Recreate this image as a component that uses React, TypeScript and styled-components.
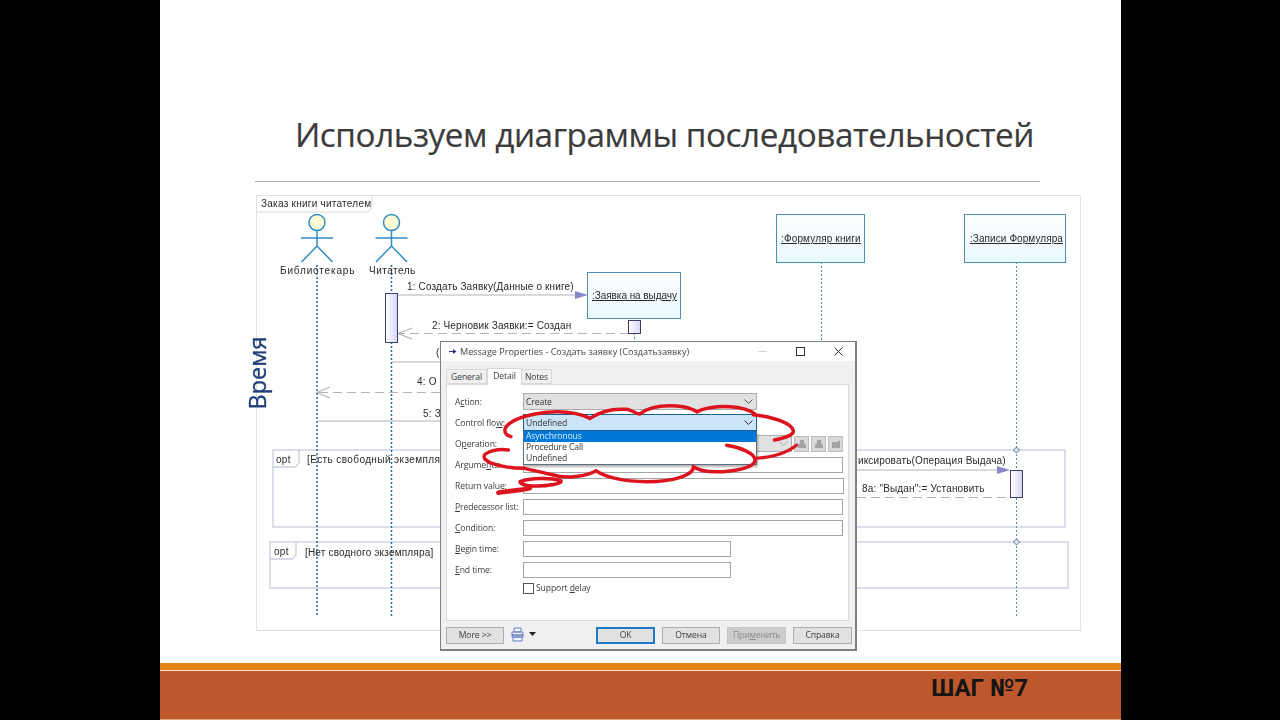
import React from "react";
import styled, { createGlobalStyle } from "styled-components";

const Global = createGlobalStyle`
  html, body { margin: 0; padding: 0; background: #000; width: 1280px; height: 720px; overflow: hidden; }
  #root { width: 1280px; height: 720px; }
`;

const Page = styled.div`
  width: 1280px;
  height: 720px;
  display: flex;
  justify-content: center;
  background: #000;
  padding-left: 1px;
  box-sizing: border-box;
`;
const Slide = styled.div`
  width: 961px;
  height: 720px;
  background: #fff;
  display: flex;
  flex-direction: column;
`;
const TitleBlock = styled.div`
  height: 195px;
  display: flex;
  flex-direction: column;
`;
const Title = styled.h1`
  margin: 0;
  padding: 111px 0 0 135px;
  height: 157px;
  box-sizing: border-box;
  font: 400 33.3px/46px "Open Sans", sans-serif;
  color: #3c3c3c;
  letter-spacing: -0.45px;
  white-space: nowrap;
  -webkit-text-stroke: 0.2px #3c3c3c;
`;
const Rule = styled.div`
  margin-left: 95px;
  margin-top: 24px;
  width: 785px;
  height: 1px;
  background: #a9a9a9;
`;
const Panel = styled.div`
  position: relative;
  margin-left: 96px;
  width: 825px;
  height: 436px;
  box-shadow: inset 0 0 0 1px #e2e2e2;
  font-family: "Liberation Sans", Arial, sans-serif;
  filter: blur(0.3px);
`;
const DiagramArt = styled.svg`
  position: absolute;
  left: 0;
  top: 0;
  width: 825px;
  height: 436px;
`;
const Label = styled.span<{ $x: number; $y: number; $u?: boolean; $ls?: number }>`
  position: absolute;
  left: ${(p) => p.$x - 256}px;
  top: ${(p) => p.$y - 195 - 6}px;
  font-size: 10px;
  line-height: 14px;
  color: #2a2a2a;
  white-space: nowrap;
  letter-spacing: ${(p) => p.$ls ?? 0.2}px;
  text-decoration: ${(p) => (p.$u ? "underline" : "none")};
`;
const TimeLabel = styled.span`
  position: absolute;
  left: -39px;
  top: 164px;
  width: 80px;
  text-align: center;
  transform: rotate(-90deg);
  font: 400 23.5px/28px "Open Sans", sans-serif;
  color: #1f3d7a;
  -webkit-text-stroke: 0.3px #1f3d7a;
`;

const Dialog = styled.div`
  position: absolute;
  left: 184px;
  top: 146px;
  width: 417px;
  height: 310px;
  box-sizing: border-box;
  border: 1px solid #7f7f7f;
  border-right-width: 2px;
  border-bottom-width: 2px;
  background: #f0f0f0;
  font: 400 8.6px/12px "Open Sans", sans-serif;
  letter-spacing: -0.1px;
  color: #3c3c3c;
  display: flex;
  flex-direction: column;
`;
const TitleBar = styled.div`
  height: 19px;
  flex: none;
  background: #fff;
  display: flex;
  align-items: center;
  padding: 0 12px 0 8px;
  gap: 3px;
  font-size: 9.1px;
  letter-spacing: -0.02px;
  color: #444;
`;
const TitleText = styled.span`
  flex: 1;
  white-space: nowrap;
`;
const WinButtons = styled.div`
  display: flex;
  align-items: center;
  gap: 29px;
`;
const TabRow = styled.div`
  display: flex;
  align-items: flex-end;
  height: 23px;
  flex: none;
  padding-left: 5px;
`;
const Tab = styled.div<{ $active?: boolean; $first?: boolean; $w: number }>`
  width: ${(p) => p.$w}px;
  height: ${(p) => (p.$active ? 17 : 15)}px;
  box-sizing: border-box;
  border: 1px solid #d9d9d9;
  border-bottom: ${(p) => (p.$active ? "none" : "1px solid #d9d9d9")};
  background: ${(p) => (p.$active ? "#fff" : "#f0f0f0")};
  text-align: center;
  line-height: ${(p) => (p.$active ? 14 : 15)}px;
  margin-bottom: ${(p) => (p.$active ? -1 : 0)}px;
  margin-left: ${(p) => (p.$active || p.$first ? 0 : -1)}px;
  position: relative;
`;
const TabPanel = styled.div`
  margin: 0 6px 0 5px;
  height: 237px;
  flex: none;
  box-sizing: border-box;
  background: #fff;
  border: 1px solid #d9d9d9;
  padding: 8px 6px 0 8px;
  display: flex;
  flex-direction: column;
  gap: 4px;
`;
const FieldRow = styled.div`
  display: grid;
  grid-template-columns: 68px 1fr;
  align-items: center;
  height: 17px;
  position: relative;
`;
const FieldLabel = styled.span`
  white-space: nowrap;
`;
const Input = styled.div<{ $w: number }>`
  width: ${(p) => p.$w}px;
  height: 16px;
  box-sizing: border-box;
  border: 1px solid #a6a6a6;
  background: #fff;
`;
const Combo = styled.div<{ $w: number; $focus?: boolean }>`
  width: ${(p) => p.$w}px;
  height: 17px;
  box-sizing: border-box;
  border: 1px solid ${(p) => (p.$focus ? "#1c5f96" : "#adadad")};
  background: ${(p) => (p.$focus ? "#cce4f7" : "#e1e1e1")};
  display: flex;
  align-items: center;
  justify-content: space-between;
  padding: 0 3px 0 2px;
  color: #333;
`;
const OpControls = styled.div`
  display: flex;
  align-items: center;
  gap: 2px;
`;
const OpButton = styled.div`
  width: 15px;
  height: 16px;
  box-sizing: border-box;
  border: 1px solid #bdbdbd;
  background: #d9d9d9;
  display: flex;
  align-items: center;
  justify-content: center;
`;
const DropList = styled.div`
  position: absolute;
  left: 68px;
  top: 17px;
  width: 234px;
  height: 34px;
  box-sizing: border-box;
  background: #fff;
  border: 1px solid #5f6f80;
  border-top: none;
  box-shadow: 1px 2px 2px rgba(0, 0, 0, 0.3);
  z-index: 2;
`;
const DropItem = styled.div<{ $sel?: boolean }>`
  height: 11px;
  line-height: 11px;
  padding-left: 2px;
  background: ${(p) => (p.$sel ? "#0078d7" : "#fff")};
  color: ${(p) => (p.$sel ? "#dbeeff" : "#333")};
`;
const CheckRow = styled.div`
  margin: 0 0 0 68px;
  display: flex;
  align-items: center;
  gap: 2px;
  height: 12px;
`;
const CheckBox = styled.div`
  width: 11px;
  height: 11px;
  box-sizing: border-box;
  border: 1px solid #555;
  background: #fff;
`;
const ButtonBar = styled.div`
  flex: 1;
  display: flex;
  align-items: flex-start;
  padding: 6px 0 0 5px;
`;
const DlgButton = styled.div<{ $w: number; $primary?: boolean; $off?: boolean; $ml?: number }>`
  width: ${(p) => p.$w}px;
  height: 17px;
  margin-left: ${(p) => p.$ml ?? 0}px;
  box-sizing: border-box;
  border: ${(p) => (p.$primary ? "2px solid #1f78c8" : p.$off ? "1px solid #c4c4c4" : "1px solid #adadad")};
  background: ${(p) => (p.$off ? "#cccccc" : "#e1e1e1")};
  color: ${(p) => (p.$off ? "#8a8a8a" : "#3c3c3c")};
  text-align: center;
  line-height: ${(p) => (p.$primary ? 13 : 15)}px;
`;
const PrintIcon = styled.svg`
  margin-left: 7px;
  width: 13px;
  height: 15px;
`;
const CaretIcon = styled.svg`
  margin: 5px 0 0 5px;
  width: 7px;
  height: 4px;
`;
const Scribble = styled.svg`
  position: absolute;
  left: -1px;
  top: -2px;
  width: 420px;
  height: 170px;
  z-index: 3;
  pointer-events: none;
`;

const Footer = styled.div`
  margin-top: auto;
  height: 57px;
  display: flex;
  flex-direction: column;
`;
const OrangeBar = styled.div`
  height: 7px;
  background: #e48312;
  border-bottom: 1px solid #f6e3c8;
`;
const RustBar = styled.div`
  flex: 1;
  background: #bd582c;
  border-bottom: 1px solid #d9a58a;
  display: flex;
  justify-content: flex-end;
  padding-right: 93px;
`;
const StepText = styled.span`
  font: 700 24px/33px "Roboto", sans-serif;
  color: #141414;
  margin-top: 1px;
`;

const Chevron = ({ c = "#555" }: { c?: string }) => (
  <svg width="9" height="5" viewBox="0 0 9 5">
    <path d="M0.5 0.5 L4.5 4.5 L8.5 0.5" fill="none" stroke={c} strokeWidth="1" />
  </svg>
);

const Actor = ({ x }: { x: number }) => (
  <g stroke="#2e8cc4" strokeWidth="1.5" fill="none">
    <circle cx={x} cy={222.5} r={8} fill="#fffbd6" />
    <path d={`M${x} 230.5V246M${x - 16} 238H${x + 16}M${x} 246L${x - 15.5} 262M${x} 246L${x + 15.5} 262`} />
  </g>
);

const ObjectBox = ({ x, y, w, h }: { x: number; y: number; w: number; h: number }) => (
  <rect x={x - 0.5} y={y + 0.5} width={w} height={h} fill="url(#obj)" stroke="#4f8fb0" strokeWidth="1" />
);

const Activation = ({ x, y, h }: { x: number; y: number; h: number }) => (
  <rect x={x + 0.5} y={y + 0.5} width={12} height={h} fill="url(#act)" stroke="#3d3d6b" strokeWidth="1" />
);

const Frame = ({ x, y, w, h, tab }: { x: number; y: number; w: number; h: number; tab: number }) => (
  <g fill="none" stroke="#c9cddf" strokeWidth="1.3">
    <rect x={x} y={y} width={w} height={h} />
    <path d={`M${x} ${y + 17}H${x + tab - 4}L${x + tab} ${y + 13}V${y}`} />
  </g>
);

const labels: { x: number; y: number; t: string; u?: boolean; ls?: number }[] = [
  { x: 261, y: 203, t: "Заказ книги читателем", ls: 0.25 },
  { x: 280, y: 270, t: "Библиотекарь", ls: 0.85 },
  { x: 369, y: 270, t: "Читатель", ls: 0.5 },
  { x: 407, y: 286, t: "1: Создать Заявку(Данные о книге)", ls: 0.14 },
  { x: 592, y: 295, t: ":Заявка на выдачу", u: true, ls: -0.05 },
  { x: 432, y: 325, t: "2: Черновик Заявки:= Создан", ls: 0.14 },
  { x: 436, y: 352, t: "(" },
  { x: 417, y: 381, t: "4: О" },
  { x: 423, y: 413, t: "5: З" },
  { x: 781, y: 238, t: ":Формуляр книги", u: true, ls: 0.15 },
  { x: 970, y: 238, t: ":Записи Формуляра", u: true, ls: 0.08 },
  { x: 276, y: 459, t: "opt", ls: 0.3 },
  { x: 307, y: 459, t: "[Есть свободный экземпляр", ls: 0.4 },
  { x: 274, y: 551, t: "opt", ls: 0.3 },
  { x: 305, y: 552, t: "[Нет сводного экземпляра]", ls: 0.18 },
  { x: 858, y: 460, t: "иксировать(Операция Выдача)", ls: 0.14 },
  { x: 862, y: 488, t: '8а: "Выдан":= Установить', ls: 0.18 },
];

const fields = [
  { l: <>Argume<u>n</u>ts:</>, w: 320 },
  { l: <>Return value:</>, w: 321 },
  { l: <><u>P</u>redecessor list:</>, w: 320 },
  { l: <><u>C</u>ondition:</>, w: 320 },
  { l: <><u>B</u>egin time:</>, w: 208 },
  { l: <><u>E</u>nd time:</>, w: 208 },
];

export default function App() {
  return (
    <Page>
      <Global />
      <Slide>
        <TitleBlock>
          <Title>Используем диаграммы последовательностей</Title>
          <Rule />
        </TitleBlock>
        <Panel>
          <DiagramArt viewBox="256 195 825 436">
            <defs>
              <linearGradient id="obj" x1="0" y1="0" x2="0" y2="1">
                <stop offset="0" stopColor="#ffffff" />
                <stop offset="1" stopColor="#e8f8fd" />
              </linearGradient>
              <linearGradient id="act" x1="0" y1="0" x2="1" y2="0">
                <stop offset="0" stopColor="#ffffff" />
                <stop offset="1" stopColor="#d5d5f5" />
              </linearGradient>
            </defs>
            <path d="M257 212H368L372 208V195" fill="none" stroke="#dcdcdc" />
            <Frame x={273} y={450} w={792} h={77} tab={26} />
            <Frame x={270} y={542} w={798} h={46} tab={26} />
            <g stroke="#1b6fa8" strokeWidth="1.5" strokeDasharray="2 2" fill="none">
              <path d="M317 265V617M391.5 265V293M391.5 342V617" />
            </g>
            <g stroke="#4f8fb0" strokeWidth="1" strokeDasharray="2 2" fill="none">
              <path d="M821.5 262V341M1016.5 262V617M634.5 333V341" />
            </g>
            <Actor x={317} />
            <Actor x={391.5} />
            <ObjectBox x={588} y={272} w={93} h={46} />
            <ObjectBox x={777} y={214} w={88} h={48} />
            <ObjectBox x={965} y={214} w={101} h={48} />
            <g stroke="#b4b4b4" strokeWidth="1.2" fill="none">
              <path d="M397 295H576M392 362H440M317 421H440M857 470H998" />
              <path d="M629 333.5H399M440 392.5H319M857 497.5H1010" strokeDasharray="9 5" />
              <path d="M412 328L398 333.5L412 339M330 387L317 392.5L330 398" />
            </g>
            <path d="M575 291L588 295L575 299Z M997 466L1010 470L997 474Z" fill="#8a85c4" />
            <Activation x={385} y={293} h={49} />
            <Activation x={628} y={320} h={13} />
            <Activation x={1010} y={470} h={27} />
            <path d="M1016.5 447L1019.5 450L1016.5 453L1013.5 450Z M1016.5 539L1019.5 542L1016.5 545L1013.5 542Z" fill="#dfe8f2" stroke="#33577a" strokeWidth="0.8" />
            <path d="M492 651V654M542 651V654M606 651V654M738 651V654" stroke="#444" strokeWidth="1" />
          </DiagramArt>
          {labels.map((l) => (
            <Label key={l.t} $x={l.x} $y={l.y} $u={l.u} $ls={l.ls}>
              {l.t}
            </Label>
          ))}
          <TimeLabel>Время</TimeLabel>
          <Dialog>
            <TitleBar>
              <svg width="8" height="7" viewBox="0 0 8 7">
                <path d="M0 3.5H5" stroke="#303080" strokeWidth="1" />
                <path d="M4 1L7.5 3.5L4 6Z" fill="#303080" />
              </svg>
              <TitleText>Message Properties - Создать заявку (Создатьзаявку)</TitleText>
              <WinButtons>
                <svg width="9" height="9" viewBox="0 0 9 9">
                  <path d="M0 4.5H9" stroke="#d5d5d5" />
                </svg>
                <svg width="9" height="9" viewBox="0 0 9 9">
                  <rect x="0.5" y="0.5" width="8" height="8" fill="none" stroke="#333" />
                </svg>
                <svg width="9" height="9" viewBox="0 0 9 9">
                  <path d="M0.5 0.5L8.5 8.5M8.5 0.5L0.5 8.5" stroke="#333" />
                </svg>
              </WinButtons>
            </TitleBar>
            <TabRow>
              <Tab $w={41} $first>General</Tab>
              <Tab $w={35} $active>Detail</Tab>
              <Tab $w={31}>Notes</Tab>
            </TabRow>
            <TabPanel>
              <FieldRow>
                <FieldLabel>A<u>c</u>tion:</FieldLabel>
                <Combo $w={234}>Create<Chevron /></Combo>
              </FieldRow>
              <FieldRow>
                <FieldLabel>Control flo<u>w</u>:</FieldLabel>
                <Combo $w={234} $focus>Undefined<Chevron c="#333" /></Combo>
                <DropList>
                  <DropItem $sel>Asynchronous</DropItem>
                  <DropItem>Procedure Call</DropItem>
                  <DropItem>Undefined</DropItem>
                </DropList>
              </FieldRow>
              <FieldRow>
                <FieldLabel>O<u>p</u>eration:</FieldLabel>
                <OpControls>
                  <Combo $w={269}><span /><Chevron c="#aaa" /></Combo>
                  {[0, 1, 2].map((i) => (
                    <OpButton key={i}>
                      <svg width="10" height="10" viewBox="0 0 10 10">
                        <path d={i === 2 ? "M1 3H6L9 1V9H1Z" : "M3 1H7V4L9 6V9H1V6L3 4Z"} fill="#a3a3a3" />
                      </svg>
                    </OpButton>
                  ))}
                </OpControls>
              </FieldRow>
              {fields.map((f, i) => (
                <FieldRow key={i}>
                  <FieldLabel>{f.l}</FieldLabel>
                  <Input $w={f.w} />
                </FieldRow>
              ))}
              <CheckRow>
                <CheckBox />
                <span>Support <u>d</u>elay</span>
              </CheckRow>
            </TabPanel>
            <ButtonBar>
              <DlgButton $w={58}>More &gt;&gt;</DlgButton>
              <PrintIcon viewBox="0 0 13 15">
                <path d="M3 1H10V5H3Z M1 5H12V10H1Z M2 10H11V14H2Z" fill="#eef2fb" stroke="#6a7fc0" strokeWidth="1" />
                <path d="M1 8H12" stroke="#2a3f90" strokeWidth="1" />
              </PrintIcon>
              <CaretIcon viewBox="0 0 7 4">
                <path d="M0 0H7L3.5 4Z" fill="#222" />
              </CaretIcon>
              <DlgButton $w={59} $primary $ml={60}>OK</DlgButton>
              <DlgButton $w={58} $ml={7}>Отмена</DlgButton>
              <DlgButton $w={59} $off $ml={7}>При<u>м</u>енить</DlgButton>
              <DlgButton $w={59} $ml={7}>Справка</DlgButton>
            </ButtonBar>
            <Scribble viewBox="0 0 1260 510">
              <g fill="none" stroke="#dc1420" strokeWidth="10.5" strokeLinecap="round" strokeLinejoin="round">
                <path d="M450 235C400 212 340 212 285 222C230 232 190 255 195 275C197 285 205 288 213 290" />
                <path d="M450 235C480 215 520 205 560 208C575 210 590 222 600 222C620 205 660 195 710 198C735 200 760 208 772 216C785 205 830 198 870 200C905 202 930 210 945 222" />
                <path d="M940 224C1000 230 1055 250 1060 272C1062 285 1030 295 1003 300" />
                <path d="M860 316C900 322 945 340 945 360C945 380 900 392 850 395C810 397 775 392 760 380C762 405 700 425 620 425C550 425 490 410 468 392C440 408 380 418 340 405C310 397 280 392 255 385C220 385 175 378 150 368C120 352 130 340 160 332C175 328 190 328 205 330" />
                <path d="M950 355C990 352 1040 340 1070 315" strokeWidth="9" />
                <path d="M240 425C270 414 330 412 362 422C372 430 320 440 280 438C260 438 240 432 240 425Z" />
                <path d="M175 458C205 452 245 452 270 444" strokeWidth="14" />
              </g>
            </Scribble>
          </Dialog>
        </Panel>
        <Footer>
          <OrangeBar />
          <RustBar>
            <StepText>ШАГ №7</StepText>
          </RustBar>
        </Footer>
      </Slide>
    </Page>
  );
}
